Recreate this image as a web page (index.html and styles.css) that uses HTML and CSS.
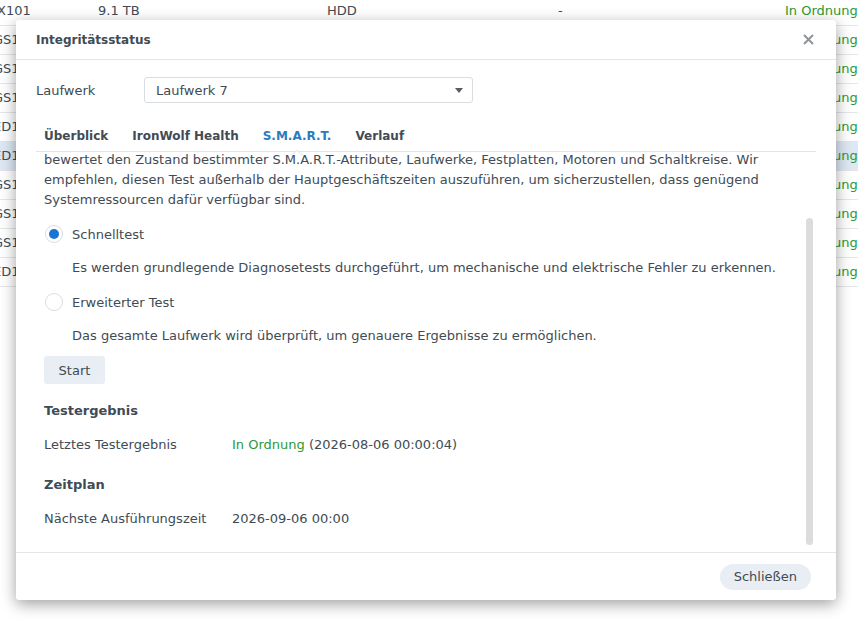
FILE: index.html
```html
<!DOCTYPE html>
<html lang="de">
<head>
<meta charset="utf-8">
<title>Integritätsstatus</title>
<link rel="stylesheet" href="styles.css">
</head>
<body>
<div class="bg-table">
  <div class="bg-row"><span class="c1 head">X101</span><span>9.1 TB</span><span>HDD</span><span>-</span><span class="ok">In Ordnung</span></div>
  <div class="bg-row"><span class="c1">GS1</span><span class="ok last">In Ordnung</span></div>
  <div class="bg-row"><span class="c1">GS1</span><span class="ok last">In Ordnung</span></div>
  <div class="bg-row"><span class="c1">GS1</span><span class="ok last">In Ordnung</span></div>
  <div class="bg-row"><span class="c1">ED1</span><span class="ok last">In Ordnung</span></div>
  <div class="bg-row selected"><span class="c1">ED1</span><span class="ok last">In Ordnung</span></div>
  <div class="bg-row"><span class="c1">GS1</span><span class="ok last">In Ordnung</span></div>
  <div class="bg-row"><span class="c1">GS1</span><span class="ok last">In Ordnung</span></div>
  <div class="bg-row"><span class="c1">GS1</span><span class="ok last">In Ordnung</span></div>
  <div class="bg-row"><span class="c1">ED1</span><span class="ok last">In Ordnung</span></div>
</div>

<div class="dialog">
  <div class="dlg-header">
    <span class="dlg-title">Integritätsstatus</span>
    <span class="dlg-close">
      <svg width="11" height="11" viewBox="0 0 11 11"><path d="M1 1 L10 10 M10 1 L1 10" stroke="#8e949a" stroke-width="2" fill="none"/></svg>
    </span>
  </div>
  <div class="dlg-body">
    <div class="field-row">
      <span class="field-label">Laufwerk</span>
      <div class="select"><span>Laufwerk 7</span><span class="caret"></span></div>
    </div>
    <div class="tabs">
      <span class="tab">Überblick</span>
      <span class="tab">IronWolf Health</span>
      <span class="tab active">S.M.A.R.T.</span>
      <span class="tab">Verlauf</span>
    </div>
    <div class="panel">
      <div class="panel-content">
        <p class="intro">bewertet den Zustand bestimmter S.M.A.R.T.-Attribute, Laufwerke, Festplatten, Motoren und Schaltkreise. Wir<br>empfehlen, diesen Test außerhalb der Hauptgeschäftszeiten auszuführen, um sicherzustellen, dass genügend<br>Systemressourcen dafür verfügbar sind.</p>
        <div class="radio-row"><span class="radio checked"></span><span>Schnelltest</span></div>
        <div class="radio-desc">Es werden grundlegende Diagnosetests durchgeführt, um mechanische und elektrische Fehler zu erkennen.</div>
        <div class="radio-row"><span class="radio"></span><span>Erweiterter Test</span></div>
        <div class="radio-desc">Das gesamte Laufwerk wird überprüft, um genauere Ergebnisse zu ermöglichen.</div>
        <button class="btn start">Start</button>
        <div class="section-title first">Testergebnis</div>
        <div class="kv"><span class="k">Letztes Testergebnis</span><span class="v"><span class="ok">In Ordnung</span> (2026-08-06 00:00:04)</span></div>
        <div class="section-title">Zeitplan</div>
        <div class="kv"><span class="k">Nächste Ausführungszeit</span><span class="v">2026-09-06 00:00</span></div>
      </div>
      <div class="scrollbar"></div>
    </div>
  </div>
  <div class="dlg-footer">
    <button class="btn pill">Schließen</button>
  </div>
</div>
</body>
</html>
```

FILE: styles.css
```css
html, body {
  margin: 0;
  padding: 0;
}
body {
  width: 858px;
  height: 623px;
  overflow: hidden;
  position: relative;
  background: #ffffff;
  font-family: "DejaVu Sans", Verdana, sans-serif;
  font-size: 13px;
  color: #414b55;
}

/* background table */
.bg-table {
  margin-top: -3px;
}
.bg-row {
  display: grid;
  grid-template-columns: 98px 229px 231px 227px 1fr;
  height: 28px;
  line-height: 28px;
  border-bottom: 1px solid #e4e7ea;
  white-space: nowrap;
  overflow: hidden;
}
.bg-row.selected {
  background: #dde8f4;
}
.bg-row .c1 {
  margin-left: -7px;
}
.bg-row .c1.head {
  margin-left: -3px;
}
.bg-row .last {
  grid-column: 5;
}
.ok {
  color: #2b9a34;
}

/* dialog */
.dialog {
  position: absolute;
  left: 16px;
  top: 20px;
  width: 820px;
  height: 580px;
  background: #ffffff;
  border-radius: 3px;
  box-shadow: 0 4px 15px rgba(0, 0, 0, 0.38);
  display: flex;
  flex-direction: column;
}
.dlg-header {
  height: 39px;
  border-bottom: 1px solid #e3e6e9;
  display: flex;
  align-items: center;
  justify-content: space-between;
  padding: 0 22px 0 20px;
}
.dlg-title {
  font-weight: bold;
  font-size: 12px;
  color: #414b55;
}
.dlg-close {
  display: flex;
  width: 11px;
  height: 11px;
}

.dlg-body {
  flex: 1;
  padding: 17px 20px 0 20px;
  display: flex;
  flex-direction: column;
  min-height: 0;
}
.field-row {
  display: flex;
  align-items: center;
  height: 26px;
}
.field-label {
  width: 108px;
}
.select {
  box-sizing: border-box;
  width: 329px;
  height: 26px;
  border: 1px solid #d8dde2;
  border-radius: 3px;
  display: flex;
  align-items: center;
  justify-content: space-between;
  padding: 0 9px 0 11px;
}
.caret {
  width: 0;
  height: 0;
  border-left: 4px solid transparent;
  border-right: 4px solid transparent;
  border-top: 5px solid #555c63;
}

.tabs {
  margin-top: 18px;
  height: 30px;
  border-bottom: 1px solid #e1e4e8;
  display: flex;
  align-items: center;
  gap: 24px;
  padding-left: 8px;
}
.tab {
  font-weight: bold;
  font-size: 12px;
  color: #414b55;
  position: relative;
}
.tab.active {
  color: #2a7cbf;
}
.tab.active::before,
.tab.active::after {
  content: "";
  position: absolute;
  left: 50%;
  width: 0;
  height: 0;
  border-left: 7px solid transparent;
  border-right: 7px solid transparent;
  transform: translateX(-50%);
}
.tab.active::before {
  bottom: -13px;
  border-bottom: 6px solid #dfe2e6;
}
.tab.active::after {
  bottom: -14px;
  border-bottom: 6px solid #ffffff;
}

.panel {
  flex: 1;
  position: relative;
  overflow: hidden;
}
.panel-content {
  padding: 0 8px;
}
.intro {
  margin: -2px 0 0 0;
  line-height: 20px;
  white-space: nowrap;
}
.radio-row {
  display: flex;
  align-items: center;
  height: 24px;
  margin-top: 12px;
  gap: 9px;
}
.radio {
  width: 16px;
  height: 16px;
  margin-left: 1px;
  border: 1px solid #d9dde2;
  border-radius: 50%;
  background: #ffffff;
  position: relative;
  box-sizing: content-box;
}
.radio.checked::after {
  content: "";
  position: absolute;
  left: 3px;
  top: 3px;
  width: 10px;
  height: 10px;
  border-radius: 50%;
  background: #1a74d2;
}
.radio-desc {
  margin-top: 12px;
  line-height: 20px;
  padding-left: 28px;
}
.btn {
  font-family: "DejaVu Sans", Verdana, sans-serif;
  font-size: 13px;
  color: #414b55;
  background: #e9eef4;
  border: none;
  border-radius: 3px;
  cursor: pointer;
}
.start {
  display: block;
  margin-top: 10px;
  width: 61px;
  height: 28px;
  padding: 0;
}
.section-title {
  font-weight: bold;
  line-height: 20px;
  margin-top: 20px;
}
.section-title.first {
  margin-top: 17px;
}
.kv {
  display: flex;
  line-height: 20px;
  margin-top: 14px;
}
.kv .k {
  width: 188px;
}
.scrollbar {
  position: absolute;
  right: 3px;
  top: 66px;
  width: 7px;
  height: 327px;
  border-radius: 4px;
  background: #dcdcdc;
}

.dlg-footer {
  height: 47px;
  border-top: 1px solid #e3e6e9;
  display: flex;
  align-items: center;
  justify-content: flex-end;
  padding-right: 25px;
}
.pill {
  height: 26px;
  padding: 0 14px;
  border-radius: 13px;
}
```
